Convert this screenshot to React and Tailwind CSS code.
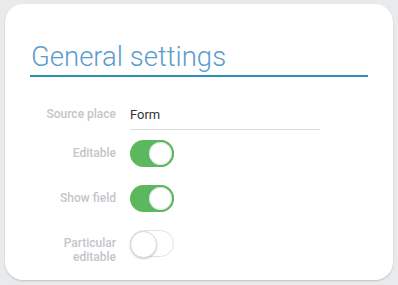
import React from 'react';

const Toggle = ({ on }) => (
  <div
    className={`relative w-[44px] h-[27px] rounded-full shrink-0 ${
      on ? 'bg-[#5cb85f]' : 'bg-white border border-[#e2e2e2]'
    }`}
  >
    <div
      className={`absolute top-0 w-[27px] h-[27px] rounded-full bg-white ${
        on
          ? 'right-0 border-2 border-[#5cb85f] shadow-[inset_0_0_0_1px_#e6e6e6]'
          : '-left-px -top-px border border-[#d8d8d8] shadow-[0_1px_2px_rgba(0,0,0,0.2)]'
      }`}
    />
  </div>
);

const Row = ({ label, children, top }) => (
  <div className={`flex ${top ? 'items-start' : 'items-center'} gap-[14px]`}>
    <div
      className={`w-[111px] text-right text-[12px] leading-[14px] font-medium text-[#c3c6ca] ${
        top ? 'mt-[6px]' : ''
      }`}
    >
      {label}
    </div>
    {children}
  </div>
);

export default function App() {
  return (
    <div
      className="w-[398px] h-[285px] bg-[#e9eaec] pt-[4px] pl-[5px]"
      style={{ fontFamily: 'Roboto, "Liberation Sans", sans-serif' }}
    >
      <div className="w-[388px] h-[276px] bg-white rounded-[18px] shadow-[0_1px_2px_rgba(0,0,0,0.18)] pt-[37px] pl-[25px] pr-[25px]">
        <div className="text-[27.5px] leading-[32px] font-light text-[#5a9ccc] pl-px">
          General settings
        </div>
        <div className="mt-[2px] h-[1.5px] bg-[#2c8db6]" />

        <div className="mt-[22px] -ml-[25px] flex flex-col">
          <Row label="Source place">
            <div className="w-[190px] h-[31px] border-b border-[#dcdcdc] flex items-center pt-[2px] text-[13px] text-[#333]">
              Form
            </div>
          </Row>
          <div className="mt-[10px] flex flex-col gap-[18px]">
            <Row label="Editable">
              <Toggle on />
            </Row>
            <Row label="Show field">
              <Toggle on />
            </Row>
            <Row label={<>Particular<br />editable</>} top>
              <Toggle on={false} />
            </Row>
          </div>
        </div>
      </div>
    </div>
  );
}
